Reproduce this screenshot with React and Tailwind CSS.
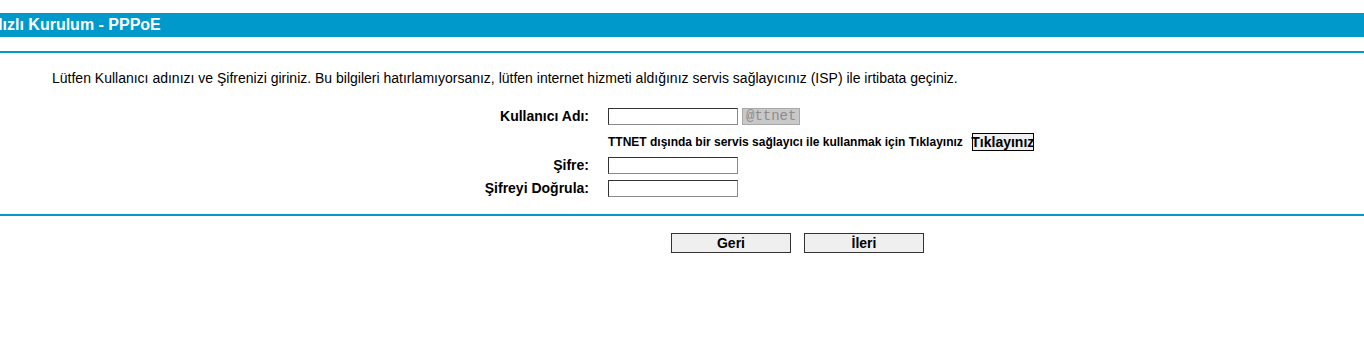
import React from "react";

const inputCls =
  "h-[17px] w-[130px] border border-t-[#333333] border-l-[#333333] border-r-[#8a8a8a] border-b-[#8a8a8a] bg-white px-1 text-[12px] outline-none";

function FormRow({ label, height, children }) {
  return (
    <div className="flex items-center" style={{ height }}>
      <div className="w-[589px] text-right text-[14px] font-bold text-black">{label}</div>
      <div className="ml-[19px] flex items-center">{children}</div>
    </div>
  );
}

export default function App() {
  return (
    <div className="w-[1364px] h-[340px] overflow-hidden bg-white font-['Liberation_Sans',Arial,sans-serif] text-black">
      <div className="mt-[13px] flex h-[24px] items-center overflow-hidden bg-[#0099cc]">
        <span className="ml-[-9px] whitespace-nowrap text-[16px] font-bold text-white">Hızlı Kurulum - PPPoE</span>
      </div>
      <div className="mt-[14px] h-[2px] bg-[#0099cc]" />

      <p className="mt-[16px] h-[18px] pl-[52px] text-[14px] leading-[18px]">
        Lütfen Kullanıcı adınızı ve Şifrenizi giriniz. Bu bilgileri hatırlamıyorsanız, lütfen internet hizmeti aldığınız servis sağlayıcınız (ISP) ile irtibata geçiniz.
      </p>

      <div className="mt-[19px] flex flex-col">
        <FormRow label="Kullanıcı Adı:" height={20}>
          <input className={inputCls} type="text" />
          <span className="ml-[4px] flex h-[17px] w-[58px] shrink-0 items-center border border-[#a8a8a8] bg-[#c8c8c8] pl-[3px] font-['Liberation_Mono','Courier_New',monospace] text-[14px] text-[#8c8c8c]">
            @ttnet
          </span>
        </FormRow>
        <div className="mt-[4px]">
          <FormRow label="" height={24}>
            <span className="whitespace-nowrap text-[12px] font-bold">
              TTNET dışında bir servis sağlayıcı ile kullanmak için Tıklayınız
            </span>
            <button className="ml-[9px] flex h-[18px] w-[62px] items-center justify-center border border-black bg-[#efefef] text-[14px] font-bold leading-none">
              Tıklayınız
            </button>
          </FormRow>
        </div>
        <div className="mt-[1px]">
          <FormRow label="Şifre:" height={21}>
            <input className={inputCls} type="password" />
          </FormRow>
        </div>
        <div className="mt-[2px]">
          <FormRow label="Şifreyi Doğrula:" height={21}>
            <input className={inputCls} type="password" />
          </FormRow>
        </div>
      </div>

      <div className="mt-[15px] h-[2px] bg-[#0099cc]" />

      <div className="mt-[17px] flex gap-[13px] pl-[671px]">
        <button className="h-[20px] w-[120px] border border-[#333333] bg-[#efefef] text-[14px] font-bold leading-none">Geri</button>
        <button className="h-[20px] w-[120px] border border-[#333333] bg-[#efefef] text-[14px] font-bold leading-none">İleri</button>
      </div>
    </div>
  );
}
